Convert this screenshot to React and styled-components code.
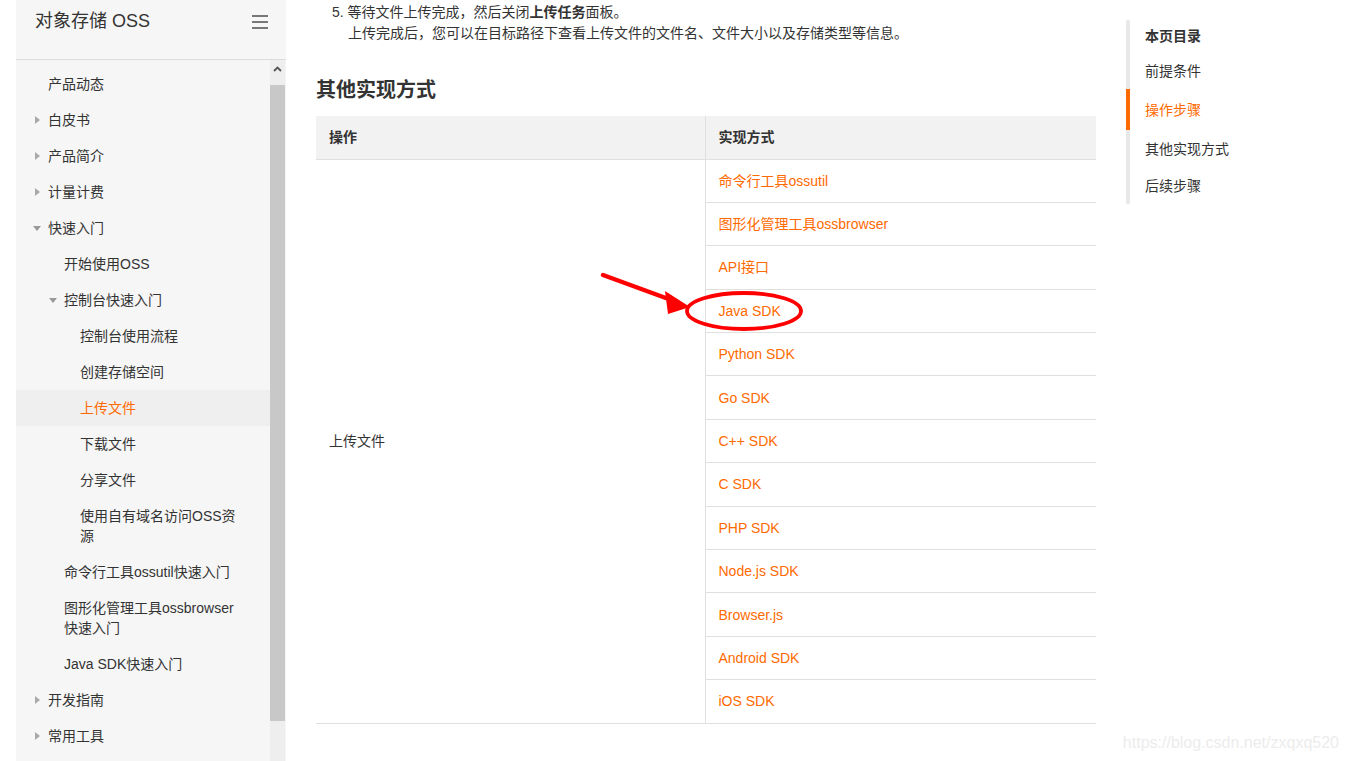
import React from "react";
import styled, { createGlobalStyle } from "styled-components";

const GlobalStyle = createGlobalStyle`
  html, body {
    margin: 0;
    padding: 0;
    background: #fff;
    overflow: hidden;
  }
  body {
    font-family: "Liberation Sans", "Noto Sans CJK SC", sans-serif;
    color: #333;
  }
`;

const navItems = [
  { label: "产品动态", level: 1 },
  { label: "白皮书", level: 1, arrow: "right" },
  { label: "产品简介", level: 1, arrow: "right" },
  { label: "计量计费", level: 1, arrow: "right" },
  { label: "快速入门", level: 1, arrow: "down" },
  { label: "开始使用OSS", level: 2 },
  { label: "控制台快速入门", level: 2, arrow: "down" },
  { label: "控制台使用流程", level: 3 },
  { label: "创建存储空间", level: 3 },
  { label: "上传文件", level: 3, active: true },
  { label: "下载文件", level: 3 },
  { label: "分享文件", level: 3 },
  { label: "使用自有域名访问OSS资源", level: 3 },
  { label: "命令行工具ossutil快速入门", level: 2 },
  { label: "图形化管理工具ossbrowser快速入门", level: 2 },
  { label: "Java SDK快速入门", level: 2 },
  { label: "开发指南", level: 1, arrow: "right" },
  { label: "常用工具", level: 1, arrow: "right" },
];

const links = [
  "命令行工具ossutil",
  "图形化管理工具ossbrowser",
  "API接口",
  "Java SDK",
  "Python SDK",
  "Go SDK",
  "C++ SDK",
  "C SDK",
  "PHP SDK",
  "Node.js SDK",
  "Browser.js",
  "Android SDK",
  "iOS SDK",
];

const tocItems = [
  { label: "前提条件" },
  { label: "操作步骤", active: true },
  { label: "其他实现方式" },
  { label: "后续步骤" },
];

export default function App() {
  return (
    <>
      <GlobalStyle />
      <Page>
        <Sidebar>
          <SidebarHeader>
            <SidebarTitle>对象存储 OSS</SidebarTitle>
            <Hamburger>
              <span />
              <span />
              <span />
            </Hamburger>
          </SidebarHeader>
          <NavArea>
            <NavList>
              {navItems.map((item) => (
                <NavItem key={item.label} $level={item.level} $active={item.active}>
                  <ArrowSlot>{item.arrow && <Arrow $dir={item.arrow} />}</ArrowSlot>
                  <NavText>{item.label}</NavText>
                </NavItem>
              ))}
            </NavList>
            <Scrollbar>
              <ScrollButton>
                <svg width="9" height="6" viewBox="0 0 9 6">
                  <path d="M1 5 L4.5 1.5 L8 5" fill="none" stroke="#555" strokeWidth="1.8" />
                </svg>
              </ScrollButton>
              <ScrollThumb />
            </Scrollbar>
          </NavArea>
        </Sidebar>

        <Main>
          <Step>
            5. 等待文件上传完成，然后关闭<b>上传任务</b>面板。
          </Step>
          <StepNote>上传完成后，您可以在目标路径下查看上传文件的文件名、文件大小以及存储类型等信息。</StepNote>
          <SectionTitle>其他实现方式</SectionTitle>
          <Table>
            <thead>
              <tr>
                <Th $divider>操作</Th>
                <Th>实现方式</Th>
              </tr>
            </thead>
            <tbody>
              {links.map((link, i) => (
                <Tr key={link}>
                  {i === 0 && (
                    <Td rowSpan={links.length} $divider>
                      上传文件
                    </Td>
                  )}
                  <Td>
                    <Link href="#">{link}</Link>
                  </Td>
                </Tr>
              ))}
            </tbody>
          </Table>
        </Main>

        <Toc>
          <TocTitle>本页目录</TocTitle>
          {tocItems.map((item) => (
            <TocItem key={item.label} $active={item.active}>
              {item.label}
            </TocItem>
          ))}
        </Toc>
      </Page>

      <Annotation width="1349" height="761" viewBox="0 0 1349 761">
        <path d="M603 275 L674 301" stroke="#f00" strokeWidth="4.5" strokeLinecap="round" />
        <polygon points="690,307 665,291 668,314" fill="#f00" />
        <ellipse cx="744" cy="311" rx="57" ry="18" fill="none" stroke="#f00" strokeWidth="3.8" />
      </Annotation>
      <Watermark>https://blog.csdn.net/zxqxq520</Watermark>
    </>
  );
}

const Page = styled.div`
  display: flex;
  align-items: flex-start;
  height: 761px;
  overflow: hidden;
`;

const Sidebar = styled.aside`
  margin-left: 16px;
  width: 270px;
  height: 761px;
  background: #f6f6f6;
  display: flex;
  flex-direction: column;
  flex-shrink: 0;
`;

const SidebarHeader = styled.div`
  height: 60px;
  border-bottom: 1px solid #dcdcdc;
  display: flex;
  align-items: flex-start;
  justify-content: space-between;
  padding: 9px 18px 0 19px;
  box-sizing: border-box;
  flex-shrink: 0;
`;

const SidebarTitle = styled.div`
  font-size: 18px;
  line-height: 24px;
  color: #333;
`;

const Hamburger = styled.div`
  width: 16px;
  display: flex;
  flex-direction: column;
  gap: 4px;
  margin-top: 6px;

  span {
    display: block;
    height: 2px;
    background: #777;
  }
`;

const NavArea = styled.div`
  flex: 1;
  display: flex;
  overflow: hidden;
`;

const NavList = styled.ul`
  list-style: none;
  margin: 0;
  padding: 6px 0 0;
  width: 254px;
  flex-shrink: 0;
`;

const NavItem = styled.li`
  display: flex;
  align-items: flex-start;
  padding: 8px 28px 8px ${(p) => (p.$level - 1) * 16 + 19}px;
  font-size: 14px;
  line-height: 20px;
  color: ${(p) => (p.$active ? "#ff6a00" : "#333")};
  background: ${(p) => (p.$active ? "#efefef" : "transparent")};
`;

const ArrowSlot = styled.span`
  width: 13px;
  height: 20px;
  flex-shrink: 0;
  display: flex;
  align-items: center;
`;

const Arrow = styled.span`
  width: 0;
  height: 0;
  ${(p) =>
    p.$dir === "down"
      ? `border-left: 4px solid transparent;
         border-right: 4px solid transparent;
         border-top: 5px solid #999;
         margin-left: -2px;`
      : `border-top: 4px solid transparent;
         border-bottom: 4px solid transparent;
         border-left: 5px solid #aaa;`}
`;

const NavText = styled.span`
  flex: 1;
`;

const Scrollbar = styled.div`
  width: 15px;
  background: #eee;
  display: flex;
  flex-direction: column;
  flex-shrink: 0;
`;

const ScrollButton = styled.div`
  height: 25px;
  display: flex;
  justify-content: center;
  padding-top: 6px;
  box-sizing: border-box;
`;

const ScrollThumb = styled.div`
  height: 636px;
  background: #c8c8c8;
`;

const Main = styled.main`
  margin-left: 30px;
  width: 780px;
  flex-shrink: 0;
  font-size: 14px;
  line-height: 21px;
  color: #333;
`;

const Step = styled.p`
  margin: 2px 0 0 16px;

  b {
    font-weight: bold;
  }
`;

const StepNote = styled.p`
  margin: 0 0 0 32px;
`;

const SectionTitle = styled.h2`
  margin: 32px 0 12px;
  font-size: 20px;
  line-height: 28px;
  font-weight: bold;
  color: #333;
`;

const Table = styled.table`
  width: 780px;
  border-collapse: collapse;
  table-layout: fixed;
`;

const Th = styled.th`
  width: ${(p) => (p.$divider ? "389px" : "auto")};
  height: 43px;
  padding: 0 13px;
  box-sizing: border-box;
  background: #f2f2f2;
  text-align: left;
  font-weight: bold;
  font-size: 14px;
  border-bottom: 1px solid #e0e0e0;
  border-right: ${(p) => (p.$divider ? "1px solid #e0e0e0" : "none")};
`;

const Tr = styled.tr`
  height: 43.4px;
`;

const Td = styled.td`
  padding: 0 13px;
  font-size: 14px;
  line-height: 20px;
  vertical-align: middle;
  border-bottom: 1px solid #e0e0e0;
  border-right: ${(p) => (p.$divider ? "1px solid #e0e0e0" : "none")};
`;

const Link = styled.a`
  color: #ff6a00;
  text-decoration: none;
`;

const Toc = styled.nav`
  margin: 20px 0 0 30px;
  width: 190px;
  border-left: 4px solid #e8e8e8;
  font-size: 14px;
  line-height: 20px;
  color: #333;
  flex-shrink: 0;
`;

const TocTitle = styled.div`
  padding: 6px 0 6px 15px;
  font-weight: bold;
`;

const TocItem = styled.div`
  position: relative;
  padding: ${(p) => (p.$active ? "10.5px" : "8.5px")} 0 ${(p) => (p.$active ? "10.5px" : "8.5px")} 15px;
  color: ${(p) => (p.$active ? "#ff6a00" : "#333")};

  &::before {
    content: "";
    display: ${(p) => (p.$active ? "block" : "none")};
    position: absolute;
    left: -4px;
    top: 0;
    bottom: 0;
    width: 4px;
    background: #ff6a00;
  }
`;

const Annotation = styled.svg`
  position: absolute;
  left: 0;
  top: 0;
  pointer-events: none;
`;

const Watermark = styled.div`
  position: absolute;
  right: 10px;
  top: 732px;
  font-size: 16px;
  line-height: 22px;
  color: #ececec;
  font-family: "Liberation Sans", sans-serif;
`;
